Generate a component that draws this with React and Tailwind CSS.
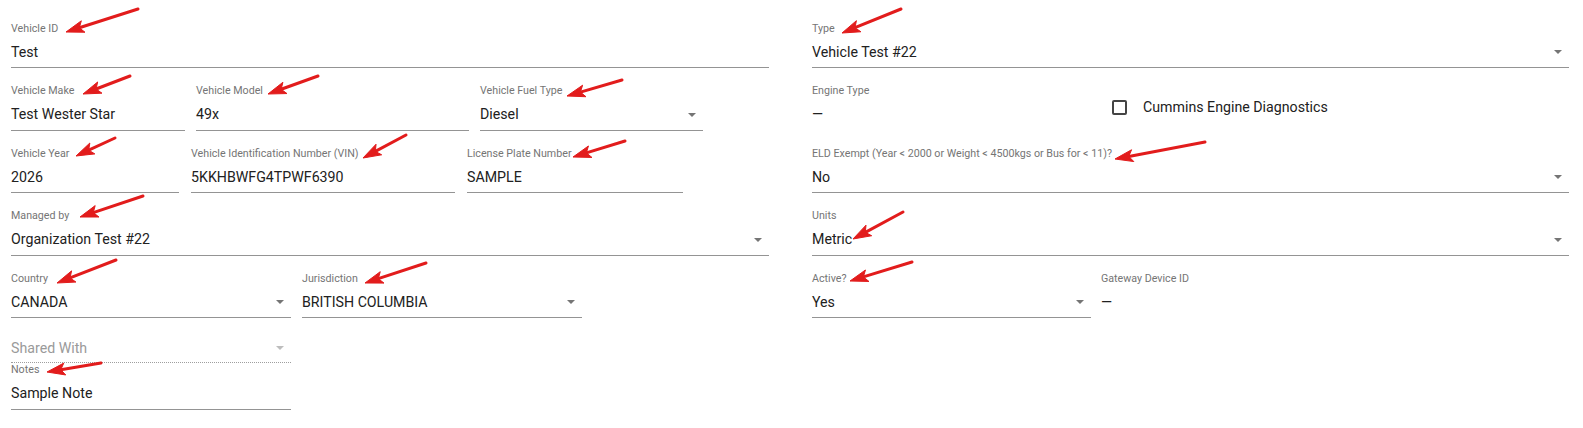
import React from 'react'

const LABEL = 'h-[13px] text-[10.7px] leading-[13px] text-[#757575] whitespace-nowrap'
const VALUE = 'text-[14.2px] leading-[19px] whitespace-nowrap'

function Caret({ muted }) {
  return (
    <span
      className={`ml-auto mr-[7px] h-0 w-0 border-x-[4px] border-t-[4px] border-x-transparent ${
        muted ? 'border-t-[#bdbdbd]' : 'border-t-[#757575]'
      }`}
    />
  )
}

function Field({ label, value, select, className = '' }) {
  return (
    <div className={`flex flex-col ${className}`}>
      <div className={LABEL}>{label}</div>
      <div className="flex items-center border-b border-[#949494] pt-[8px] pb-[5.5px]">
        <span className={`${VALUE} text-[#212121]`}>{value}</span>
        {select && <Caret />}
      </div>
    </div>
  )
}

function ReadOnly({ label, value, className = '' }) {
  return (
    <div className={`flex flex-col ${className}`}>
      <div className={LABEL}>{label}</div>
      <div className={`pt-[8px] ${VALUE} text-[#212121]`}>{value}</div>
    </div>
  )
}

// annotation arrows: [tailX, tailY, tipX, tipY]
const arrows = [
  [138, 9, 66, 32],
  [130, 76, 83, 94],
  [318, 76, 268, 94],
  [622, 80, 567, 96],
  [625, 141, 573, 157],
  [115, 138, 76, 156],
  [406, 135, 363, 158],
  [143, 196, 80, 217],
  [116, 260, 57, 283],
  [426, 263, 365, 283],
  [101, 363, 47, 372],
  [901, 9, 842, 33],
  [1205, 142, 1115, 159],
  [903, 212, 853, 239],
  [912, 262, 850, 281],
]

function Arrows() {
  return (
    <svg className="pointer-events-none absolute inset-0 h-full w-full">
      {arrows.map(([x1, y1, x2, y2], i) => {
        const dx = x2 - x1
        const dy = y2 - y1
        const len = Math.hypot(dx, dy)
        const ux = dx / len
        const uy = dy / len
        const head = 18
        const half = 6
        const bx = x2 - ux * head
        const by = y2 - uy * head
        const pts = `${x2},${y2} ${bx - uy * half},${by + ux * half} ${bx + ux * 4},${by + uy * 4} ${bx + uy * half},${by - ux * half}`
        return (
          <g key={i} fill="#e21c1c" stroke="#e21c1c">
            <line x1={x1} y1={y1} x2={bx + ux * 4} y2={by + uy * 4} strokeWidth="3" strokeLinecap="round" />
            <polygon points={pts} strokeWidth="1" strokeLinejoin="round" />
          </g>
        )
      })}
    </svg>
  )
}

export default function App() {
  return (
    <div className="relative h-[428px] w-full overflow-hidden bg-white font-['Roboto',sans-serif]">
      <div className="grid grid-cols-[758px_757px] gap-x-[43px] pl-[11px] pt-[21.5px]">
        {/* left column */}
        <div className="flex flex-col">
          <Field label="Vehicle ID" value="Test" />
          <div className="mt-[16px] flex gap-[11px]">
            <Field className="w-[174px]" label="Vehicle Make" value="Test Wester Star" />
            <Field className="w-[273px]" label="Vehicle Model" value="49x" />
            <Field className="w-[223px]" label="Vehicle Fuel Type" value="Diesel" select />
          </div>
          <div className="mt-[16px] flex gap-[12px]">
            <Field className="w-[168px]" label="Vehicle Year" value="2026" />
            <Field className="w-[264px]" label="Vehicle Identification Number (VIN)" value="5KKHBWFG4TPWF6390" />
            <Field className="w-[216px]" label="License Plate Number" value="SAMPLE" />
          </div>
          <Field className="mt-[16px]" label="Managed by" value="Organization Test #22" select />
          <div className="mt-[16px] flex gap-[11px]">
            <Field className="w-[280px]" label="Country" value="CANADA" select />
            <Field className="w-[280px]" label="Jurisdiction" value="BRITISH COLUMBIA" select />
          </div>
          <div className="mt-[20.5px] flex w-[280px] items-center border-b border-dotted border-[#9e9e9e] pb-[4.5px]">
            <span className={`${VALUE} text-[#9a9a9a]`}>Shared With</span>
            <Caret muted />
          </div>
          <Field className="w-[280px]" label="Notes" value="Sample Note" />
        </div>

        {/* right column */}
        <div className="flex flex-col">
          <Field label="Type" value="Vehicle Test #22" select />
          <div className="mt-[16px] flex h-[46.5px]">
            <ReadOnly className="w-[290px]" label="Engine Type" value="—" />
            <label className="ml-[10px] mt-[16px] flex h-[15px] items-center gap-[16px]">
              <span className="h-[15px] w-[15px] rounded-[2px] border-2 border-[#444]" />
              <span className={`${VALUE} text-[#212121]`}>Cummins Engine Diagnostics</span>
            </label>
          </div>
          <Field className="mt-[16px]" label="ELD Exempt (Year < 2000 or Weight < 4500kgs or Bus for < 11)?" value="No" select />
          <Field className="mt-[16px]" label="Units" value="Metric" select />
          <div className="mt-[16px] flex gap-[10px]">
            <Field className="w-[279px]" label="Active?" value="Yes" select />
            <ReadOnly label="Gateway Device ID" value="—" />
          </div>
        </div>
      </div>
      <Arrows />
    </div>
  )
}
